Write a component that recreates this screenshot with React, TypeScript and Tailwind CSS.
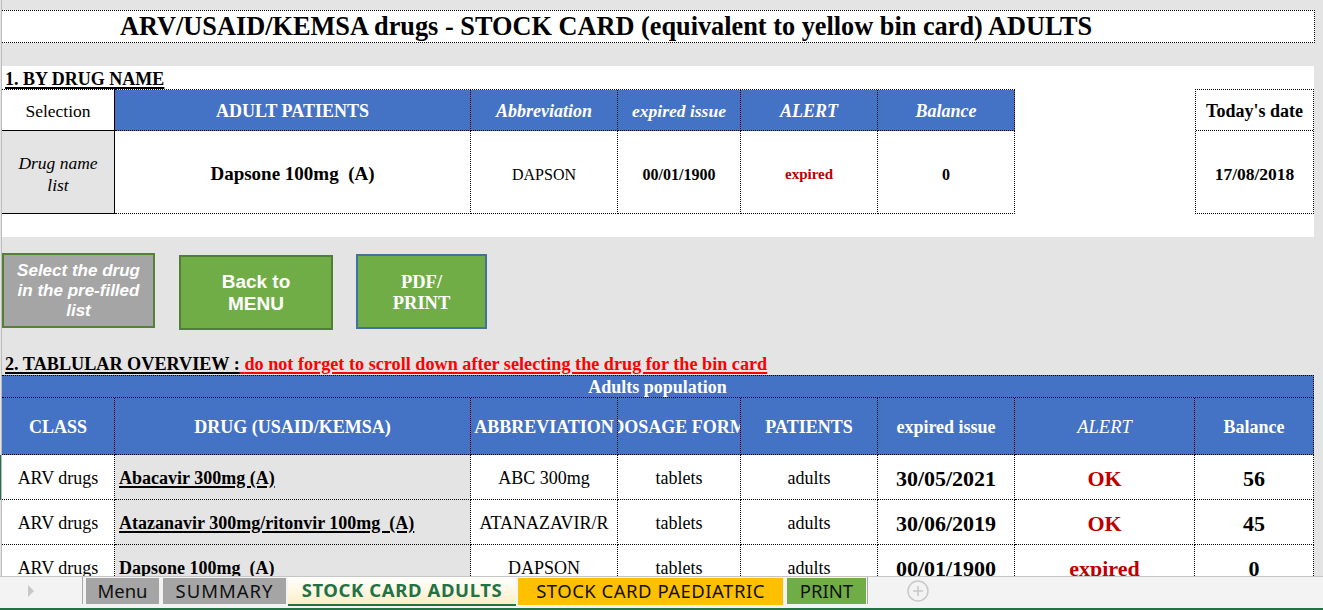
import React from "react";

type CellProps = { className?: string; children?: React.ReactNode };

function Cell({ className = "", children }: CellProps) {
  return (
    <div
      className={`shrink-0 h-full flex items-center justify-center border-r border-b border-dotted border-black overflow-hidden whitespace-nowrap ${className}`}
    >
      {children}
    </div>
  );
}

const rows = [
  { cls: "ARV drugs", drug: "Abacavir 300mg (A)", ul: true, abbr: "ABC 300mg", form: "tablets", pat: "adults", date: "30/05/2021", alert: "OK", bal: "56" },
  { cls: "ARV drugs", drug: "Atazanavir 300mg/ritonvir 100mg  (A)", ul: true, abbr: "ATANAZAVIR/R", form: "tablets", pat: "adults", date: "30/06/2019", alert: "OK", bal: "45" },
  { cls: "ARV drugs", drug: "Dapsone 100mg  (A)", ul: false, abbr: "DAPSON", form: "tablets", pat: "adults", date: "00/01/1900", alert: "expired", bal: "0" },
];

export default function App() {
  return (
    <div className="w-[1323px] h-[610px] overflow-hidden bg-[#e4e4e4] flex flex-col font-['Liberation_Serif','Times_New_Roman',serif] text-black">
      <div className="h-[576px] shrink-0 overflow-hidden pl-[1px]">
        <div className="h-full border-l border-[#bcbcbc]">
          <div className="h-[10px]" />
          {/* Title */}
          <div className="w-[1313px] h-[33px] bg-white border-y border-r border-dotted border-black flex items-center pl-[118px] pt-[2px] text-[26.3px] font-bold leading-none whitespace-nowrap">
            ARV/USAID/KEMSA drugs - STOCK CARD (equivalent to yellow bin card) ADULTS
          </div>
          <div className="h-[23px]" />
          {/* Section 1 */}
          <div className="w-[1312px] h-[171px] bg-white flex flex-col">
            <div className="h-[23px] pl-[3px] flex items-end">
              <span className="text-[18px] font-bold leading-[20px] underline decoration-[1.5px] underline-offset-[2px]">
                1. BY DRUG NAME
              </span>
            </div>
            <div className="flex">
              <div className="w-[1013px] flex flex-col">
                <div className="flex h-[42px]">
                  <div className="w-[113px] shrink-0 h-full bg-white border-t border-t-black border-dotted flex items-center justify-center text-[17.5px]">
                    <div className="w-full h-full flex items-center justify-center pt-[2px] border-r border-b border-solid border-black">Selection</div>
                  </div>
                  <div className="flex h-full border-t border-dotted border-black">
                    <Cell className="w-[356px] pt-[2px] bg-[#4472c4] text-white font-bold text-[18px]">ADULT PATIENTS</Cell>
                    <Cell className="w-[147px] pt-[2px] bg-[#4472c4] text-white font-bold italic text-[18px]">Abbreviation</Cell>
                    <Cell className="w-[123px] pt-[2px] bg-[#4472c4] text-white font-bold italic text-[17.5px]">expired issue</Cell>
                    <Cell className="w-[137px] pt-[2px] bg-[#4472c4] text-white font-bold italic text-[18px]">ALERT</Cell>
                    <Cell className="w-[137px] pt-[2px] bg-[#4472c4] text-white font-bold italic text-[18px]">Balance</Cell>
                  </div>
                </div>
                <div className="flex h-[83px]">
                  <div className="w-[113px] shrink-0 h-full pt-[4px] bg-[#e4e4e4] border-r border-b border-solid border-black flex items-center justify-center text-center italic text-[17.5px] leading-[22px]">
                    Drug name
                    <br />
                    list
                  </div>
                  <Cell className="w-[356px] pt-[5px] font-bold text-[19px] whitespace-pre">{"Dapsone 100mg  (A)"}</Cell>
                  <Cell className="w-[147px] pt-[5px] text-[16px]">DAPSON</Cell>
                  <Cell className="w-[123px] pt-[5px] font-bold text-[16px]">00/01/1900</Cell>
                  <Cell className="w-[137px] pt-[5px] font-bold text-[15px] text-[#c00000]">expired</Cell>
                  <Cell className="w-[137px] pt-[5px] font-bold text-[16px]">0</Cell>
                </div>
              </div>
              <div className="w-[180px] shrink-0" />
              <div className="w-[119px] shrink-0 border border-dotted border-black flex flex-col">
                <div className="h-[41px] pt-[2px] border-b border-dotted border-black flex items-center justify-center font-bold text-[18px] whitespace-nowrap">
                  Today's date
                </div>
                <div className="flex-1 pt-[4px] flex items-center justify-center font-bold text-[17.5px]">17/08/2018</div>
              </div>
            </div>
          </div>
          {/* Buttons and heading 2 */}
          <div className="h-[138px] flex flex-col">
            <div className="flex items-start pt-[16px]">
              <div className="w-[153px] h-[75px] bg-[#a5a5a5] border-2 border-[#548235] flex items-center justify-center text-center text-white font-bold italic text-[17px] leading-[20px] font-['Liberation_Sans',Arial,sans-serif]">
                Select the drug
                <br />
                in the pre-filled
                <br />
                list
              </div>
              <div className="ml-[24px] mt-[2px] w-[154px] h-[75px] bg-[#70ad47] border-2 border-[#507e32] flex items-center justify-center text-center text-white font-bold text-[19px] leading-[22px] font-['Liberation_Sans',Arial,sans-serif]">
                Back to
                <br />
                MENU
              </div>
              <div className="ml-[23px] mt-[1px] w-[131px] h-[75px] bg-[#70ad47] border-2 border-[#41719c] flex items-center justify-center text-center text-white font-bold text-[18.5px] leading-[21px] pt-[2px]">
                PDF/
                <br />
                PRINT
              </div>
            </div>
            <div className="mt-auto pl-[3px] pb-[1px] flex items-end whitespace-nowrap text-[18.2px] font-bold leading-[20px]">
              <span className="underline decoration-[1.5px] underline-offset-[2px]">2. TABLULAR OVERVIEW :</span>
              <span className="underline decoration-[1.5px] underline-offset-[2px] text-[#ff0000]">
                {"\u00a0"}do not forget to scroll down after selecting the drug for the bin card
              </span>
            </div>
          </div>
          {/* Lower table */}
          <div className="w-[1312px]">
            <div className="h-[23px] pt-[1px] bg-[#4472c4] border-t border-b border-r border-dotted border-black flex items-center justify-center text-white font-bold text-[18px]">
              Adults population
            </div>
            <div className="flex h-[57px] bg-[#4472c4] text-white font-bold text-[18px]">
              <Cell className="w-[113px] pt-[3px]">CLASS</Cell>
              <Cell className="w-[356px] pt-[3px]">DRUG (USAID/KEMSA)</Cell>
              <Cell className="w-[147px] pt-[3px]">ABBREVIATION</Cell>
              <Cell className="w-[123px] pt-[3px]">DOSAGE FORM</Cell>
              <Cell className="w-[137px] pt-[3px]">PATIENTS</Cell>
              <Cell className="w-[137px] pt-[3px]">expired issue</Cell>
              <Cell className="w-[180px] pt-[3px] font-normal italic text-[18.5px]">ALERT</Cell>
              <Cell className="w-[119px] pt-[3px]">Balance</Cell>
            </div>
            {rows.map((r, i) => (
              <div key={i} className="flex h-[45px] bg-white text-[18px] relative">
                {i === 0 && <div className="absolute left-[-3px] top-0 w-[2px] h-full bg-[#217346]" />}
                <Cell className="w-[113px] pt-[2px]">{r.cls}</Cell>
                <Cell className="w-[356px] pt-[2px] bg-[#e4e4e4] justify-start pl-[4px] font-bold whitespace-pre">
                  <span className={r.ul ? "underline decoration-[1.5px] underline-offset-[2px]" : ""}>{r.drug}</span>
                </Cell>
                <Cell className="w-[147px] pt-[2px]">{r.abbr}</Cell>
                <Cell className="w-[123px] pt-[2px]">{r.form}</Cell>
                <Cell className="w-[137px] pt-[2px]">{r.pat}</Cell>
                <Cell className="w-[137px] pt-[2px] font-bold text-[22px]">{r.date}</Cell>
                <Cell className="w-[180px] pt-[2px] font-bold text-[22px] text-[#c00000]">{r.alert}</Cell>
                <Cell className="w-[119px] pt-[2px] font-bold text-[22px]">{r.bal}</Cell>
              </div>
            ))}
          </div>
        </div>
      </div>
      {/* Tab bar */}
      <div className="h-[34px] shrink-0 bg-[#f3f3f3] border-t border-[#c6c6c6] border-b-2 border-b-[#217346] flex items-start font-['Noto_Sans','Open_Sans',sans-serif] text-[18.5px] leading-none">
        <div className="w-[82px] h-[27px] flex items-center pl-[27px]">
          <svg width="8" height="12" viewBox="0 0 8 12">
            <path d="M1 0 L7 6 L1 12 Z" fill="#c8c8c8" />
          </svg>
        </div>
        <div className="w-px h-[27px] bg-[#a8a8a8]" />
        <div className="ml-[3px] mt-[1px] w-[73px] h-[26px] bg-[#a5a5a5] flex items-center justify-center text-[#111]">Menu</div>
        <div className="ml-[4px] mt-[1px] w-[123px] h-[26px] bg-[#a5a5a5] flex items-center justify-center text-[#111] tracking-[1px]">SUMMARY</div>
        <div className="ml-[2px] w-[228px] h-[29px] bg-gradient-to-b from-white to-[#fcefc6] border-b-2 border-[#217346] flex items-center justify-center text-[#217346] font-bold tracking-[0.6px]">
          STOCK CARD ADULTS
        </div>
        <div className="ml-[2px] mt-[1px] w-[265px] h-[27px] bg-[#ffc000] flex items-center justify-center text-[#111] tracking-[0.5px]">
          STOCK CARD PAEDIATRIC
        </div>
        <div className="ml-[4px] mt-[1px] w-[79px] h-[26px] bg-[#70ad47] flex items-center justify-center text-[#111]">PRINT</div>
        <div className="ml-[1px] w-px h-[27px] bg-[#a8a8a8]" />
        <div className="ml-[39px] mt-[3px]">
          <svg width="22" height="22" viewBox="0 0 22 22">
            <circle cx="11" cy="11" r="10" fill="none" stroke="#c8c8c8" strokeWidth="1.5" />
            <path d="M11 6 V16 M6 11 H16" stroke="#c8c8c8" strokeWidth="1.5" />
          </svg>
        </div>
      </div>
    </div>
  );
}
